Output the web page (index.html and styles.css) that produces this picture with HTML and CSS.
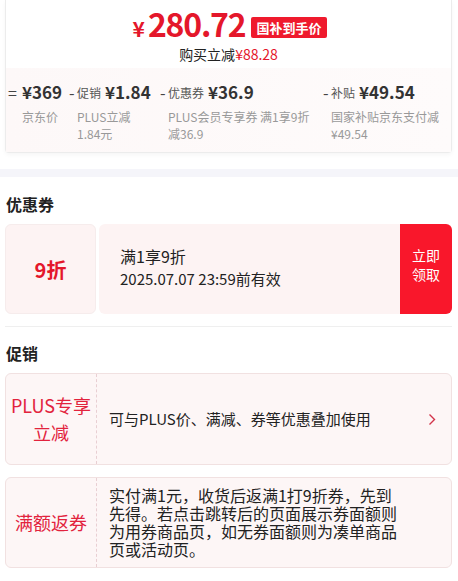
FILE: index.html
```html
<!DOCTYPE html>
<html lang="zh-CN">
<head>
    <meta charset="UTF-8">
    <meta name="viewport" content="width=device-width, initial-scale=1.0">
    <title>商品优惠</title>
    <link rel="stylesheet" href="styles.css">
</head>
<body>
    <div class="price-card">
        <div class="price-row">
            <span class="price"><span class="yen">¥</span>280.72</span>
            <span class="badge">国补到手价</span>
        </div>
        <div class="save">购买立减<span class="save-num">¥88.28</span></div>

        <div class="breakdown">
            <div class="item item-base">
                <span class="sign">=</span>
                <div class="item-body">
                    <div class="item-top"><span class="value">¥369</span></div>
                    <div class="desc">京东价</div>
                </div>
            </div>
            <div class="item item-promo">
                <span class="sign">-</span>
                <div class="item-body">
                    <div class="item-top"><span class="label">促销</span><span class="value">¥1.84</span></div>
                    <div class="desc">PLUS立减<br>1.84元</div>
                </div>
            </div>
            <div class="item item-coupon">
                <span class="sign">-</span>
                <div class="item-body">
                    <div class="item-top"><span class="label">优惠券</span><span class="value">¥36.9</span></div>
                    <div class="desc">PLUS会员专享券 满1享9折<br>减36.9</div>
                </div>
            </div>
            <div class="item item-subsidy">
                <span class="sign">-</span>
                <div class="item-body">
                    <div class="item-top"><span class="label">补贴</span><span class="value">¥49.54</span></div>
                    <div class="desc">国家补贴京东支付减<br>¥49.54</div>
                </div>
            </div>
        </div>
    </div>

    <div class="band"></div>

    <div class="section">
        <h2 class="section-title">优惠券</h2>
        <div class="coupon">
            <div class="coupon-left">9折</div>
            <div class="coupon-right">
                <div class="coupon-info">
                    <div class="coupon-name">满1享9折</div>
                    <div class="coupon-date">2025.07.07 23:59前有效</div>
                </div>
                <div class="coupon-btn">立即<br>领取</div>
            </div>
        </div>

        <div class="divider"></div>

        <h2 class="section-title title-promo">促销</h2>
        <div class="promo">
            <div class="promo-tag">PLUS专享<br>立减</div>
            <div class="promo-text">可与PLUS价、满减、券等优惠叠加使用</div>
            <svg class="chevron" width="8" height="13" viewBox="0 0 8 13">
                <polyline points="1.5,1.5 6.5,6.5 1.5,11.5" fill="none" stroke="#d2334a" stroke-width="1.4"/>
            </svg>
        </div>
        <div class="promo promo-long">
            <div class="promo-tag">满额返券</div>
            <div class="promo-text">实付满1元，收货后返满1打9折券，先到先得。若点击跳转后的页面展示券面额则为用券商品页，如无券面额则为凑单商品页或活动页。</div>
        </div>
    </div>
</body>
</html>
```

FILE: styles.css
```css
body {
    margin: 0;
    padding: 0;
    background-color: #fff;
    font-family: "Noto Sans CJK SC", "Noto Sans", sans-serif;
    color: #222;
    width: 458px;
}

.price-card {
    margin: 0 6px 0 5px;
    border: 1px solid #ececec;
    border-top: 0;
    border-radius: 0 0 4px 4px;
    padding-top: 6px;
    box-shadow: 0 2px 4px rgba(0, 0, 0, 0.04);
}

.price-row {
    display: flex;
    justify-content: center;
    align-items: center;
    height: 38px;
    padding-left: 2px;
}

.price {
    color: #e4172b;
    font-size: 32px;
    font-weight: 700;
    line-height: 38px;
    letter-spacing: -1.2px;
}

.yen {
    font-size: 21px;
    margin-right: 3px;
    letter-spacing: 0;
}

.badge {
    background-color: #ef1a2d;
    color: #fff;
    font-size: 13px;
    font-weight: 700;
    line-height: 21px;
    padding: 0 5px;
    border-radius: 2px;
    margin-left: 6px;
    margin-top: 4px;
}

.save {
    text-align: center;
    font-size: 14px;
    line-height: 20px;
    color: #222;
}

.save-num {
    color: #e4172b;
}

.breakdown {
    display: flex;
    margin-top: 4px;
    padding: 12px 0 10px 2px;
    background: linear-gradient(90deg, #fdf8f8, #fefbfb);
}

.item {
    display: flex;
}

.item-base { width: 61px; }
.item-promo { width: 91px; }
.item-coupon { width: 163px; }
.item-subsidy { width: 128px; }

.sign {
    width: 14px;
    font-size: 16px;
    line-height: 24px;
    height: 24px;
    color: #444;
}

.item-promo .sign,
.item-coupon .sign,
.item-subsidy .sign {
    width: 8px;
}

.item-top {
    display: flex;
    align-items: center;
    height: 24px;
    white-space: nowrap;
}

.label {
    font-size: 12px;
    line-height: 16px;
    color: #555;
    margin-right: 4px;
    padding-top: 2px;
}

.value {
    font-size: 17px;
    line-height: 24px;
    font-weight: 600;
    color: #333;
}

.desc {
    margin-top: 4px;
    font-size: 12px;
    line-height: 17px;
    color: #999;
    white-space: nowrap;
}

.band {
    height: 8px;
    margin-top: 16px;
    background-color: #f5f5fa;
}

.section {
    padding: 0 6px 0 5px;
}

.section-title {
    margin: 15px 0 8px 1px;
    font-size: 16px;
    font-weight: 700;
    line-height: 24px;
    color: #222;
}

.title-promo {
    margin-top: 14px;
}

.coupon {
    display: flex;
    height: 90px;
    gap: 3px;
}

.coupon-left {
    width: 91px;
    display: flex;
    align-items: center;
    justify-content: center;
    background-color: #fdf3f3;
    border: 1px solid #f6ecec;
    border-radius: 6px;
    color: #e4172b;
    font-size: 20px;
    font-weight: 700;
    box-sizing: border-box;
}

.coupon-right {
    flex: 1;
    display: flex;
    background-color: #fdf3f3;
    border-radius: 6px;
    overflow: hidden;
}

.coupon-info {
    flex: 1;
    padding-left: 21px;
    display: flex;
    flex-direction: column;
    justify-content: center;
    padding-bottom: 4px;
}

.coupon-name {
    font-size: 16px;
    line-height: 23px;
    color: #222;
}

.coupon-date {
    font-size: 15px;
    line-height: 22px;
    color: #222;
}

.coupon-btn {
    width: 52px;
    display: flex;
    align-items: center;
    justify-content: center;
    text-align: center;
    background-color: #f9172b;
    color: #fff;
    font-size: 14px;
    line-height: 19px;
    padding-bottom: 8px;
    box-sizing: border-box;
}

.divider {
    height: 1px;
    margin-top: 12px;
    background-color: #efefef;
}

.promo {
    display: flex;
    align-items: center;
    height: 92px;
    background-color: #fdf6f6;
    border: 1px solid #f1e1e1;
    border-radius: 6px;
    box-sizing: border-box;
}

.promo-long {
    margin-top: 12px;
    height: 91px;
}

.promo-tag {
    width: 90px;
    align-self: stretch;
    display: flex;
    align-items: center;
    justify-content: center;
    text-align: center;
    border-right: 1px dashed #e9cfd3;
    color: #e2233d;
    font-size: 18px;
    line-height: 27px;
}

.promo-text {
    flex: 1;
    padding-left: 12px;
    font-size: 15px;
    line-height: 20px;
    color: #222;
}

.promo-long .promo-text {
    font-size: 16px;
    line-height: 18px;
    padding-right: 54px;
    padding-bottom: 2px;
}

.chevron {
    margin-right: 15px;
}
```
